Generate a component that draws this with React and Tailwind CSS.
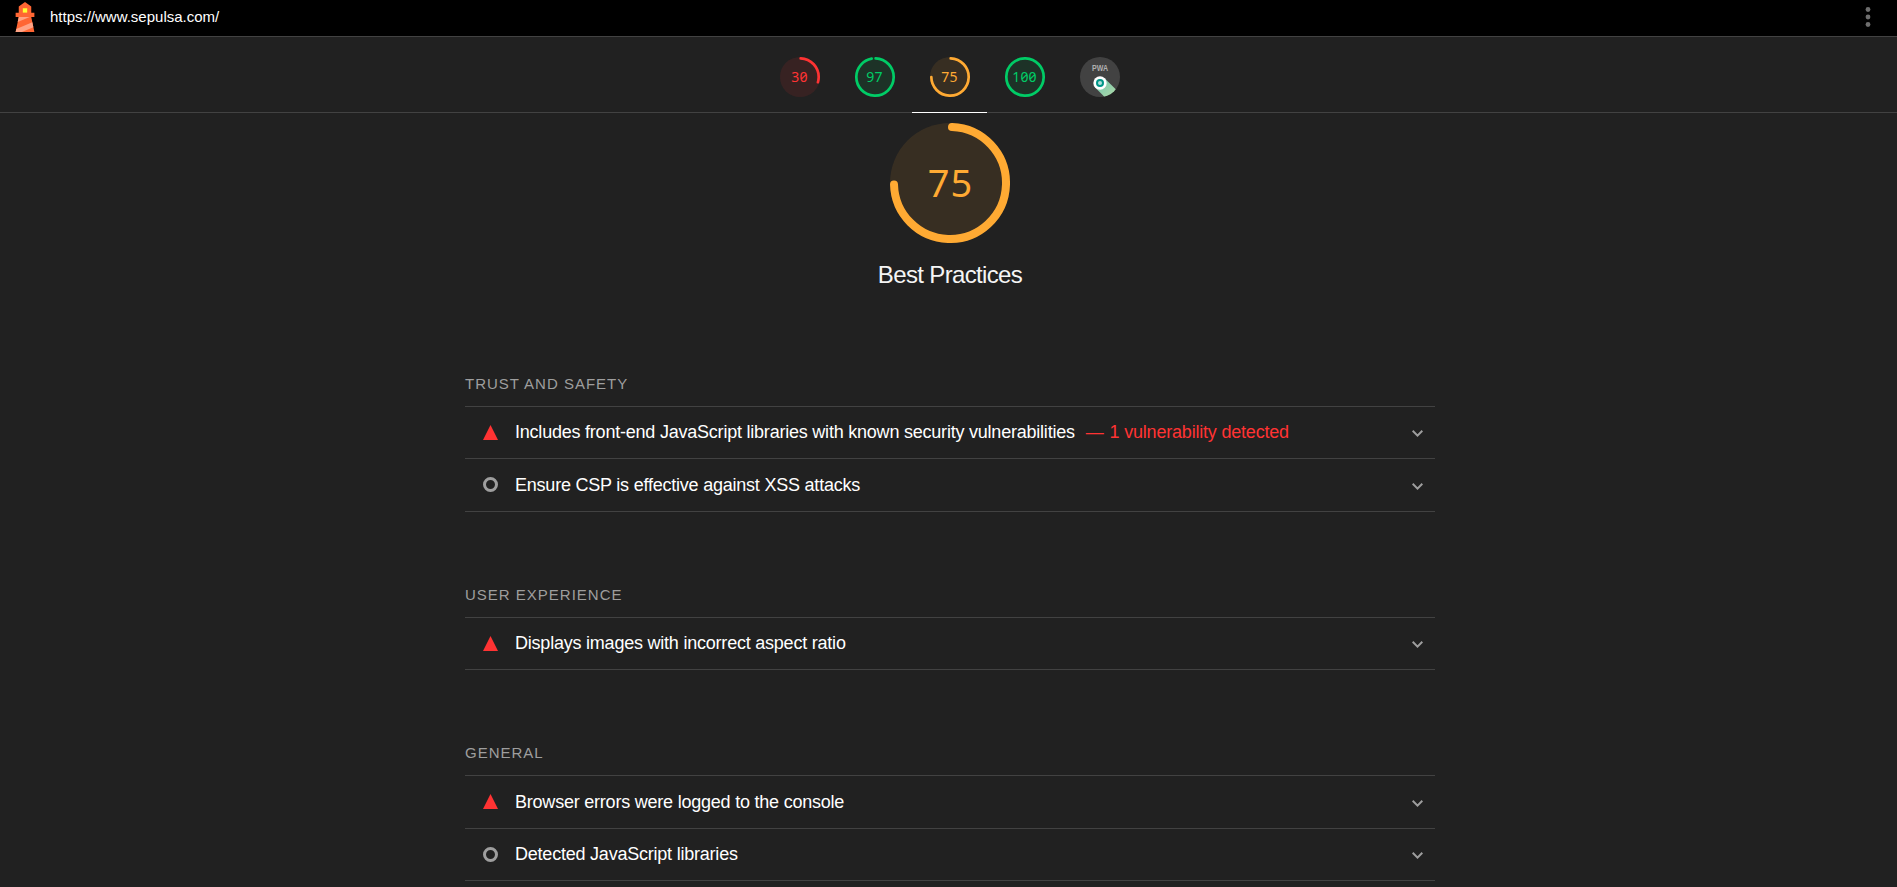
const GAUGE_RADIUS = 56;
const CIRCUMFERENCE = 2 * Math.PI * GAUGE_RADIUS;

const gauges = [
  { score: 30, color: '#ff3333' },
  { score: 97, color: '#00cc66' },
  { score: 75, color: '#ffaa33', active: true },
  { score: 100, color: '#00cc66' },
];

const groups = [
  {
    title: 'Trust and Safety',
    className: 'pt-[83px]',
    audits: [
      {
        status: 'fail',
        title: 'Includes front-end JavaScript libraries with known security vulnerabilities',
        detail: '1 vulnerability detected',
        height: 'h-[52px]',
      },
      { status: 'info', title: 'Ensure CSP is effective against XSS attacks', height: 'h-[53px]' },
    ],
  },
  {
    title: 'User Experience',
    className: 'pt-[73px]',
    audits: [{ status: 'fail', title: 'Displays images with incorrect aspect ratio', height: 'h-[52px]' }],
  },
  {
    title: 'General',
    className: 'pt-[73px]',
    audits: [
      { status: 'fail', title: 'Browser errors were logged to the console', height: 'h-[53px]' },
      { status: 'info', title: 'Detected JavaScript libraries', height: 'h-[52px]' },
    ],
  },
];

function Ring({ score, color, className }) {
  const full = score === 100;
  const dash = full ? CIRCUMFERENCE : (score / 100) * CIRCUMFERENCE - 4;
  return (
    <svg viewBox="0 0 120 120" className={className}>
      <circle cx="60" cy="60" r="60" fill={color} fillOpacity="0.1" />
      <circle
        cx="60"
        cy="60"
        r={GAUGE_RADIUS}
        fill="none"
        stroke={color}
        strokeWidth="8"
        strokeLinecap="round"
        strokeDasharray={`${dash} ${CIRCUMFERENCE}`}
        transform="rotate(-87.95 60 60)"
      />
    </svg>
  );
}

function SmallGauge({ score, color, active }) {
  return (
    <div className={`flex h-[76px] w-[75px] justify-center border-b pt-5 ${active ? 'border-white' : 'border-transparent'}`}>
      <div className="grid size-10 place-items-center">
        <Ring score={score} color={color} className="col-start-1 row-start-1 size-10" />
        <span
          className="col-start-1 row-start-1 pb-px font-['Noto_Sans',sans-serif] text-[14px] leading-none tracking-[0.2px] slashed-zero"
          style={{ color }}
        >
          {score}
        </span>
      </div>
    </div>
  );
}

function Logo() {
  return (
    <svg viewBox="0 0 48 48" className="size-[30px]">
      <path d="m14 7 10-7 10 7v10h5v7h-5l5 24H9l5-24H9v-7h5V7Z" fill="#ff6633" />
      <path
        d="M31.561 24H14l-1.689 8.105L31.561 24ZM18.983 48H9l1.022-4.907L35.723 32.27l1.663 7.98L18.983 48Z"
        fill="#ffa385"
      />
      <path fill="#ffff33" d="M20.5 10h7v7h-7z" />
    </svg>
  );
}

function PwaBadge() {
  return (
    <svg viewBox="0 0 40 40" className="size-10">
      <defs>
        <linearGradient id="beam" x1="20" y1="24" x2="32" y2="38" gradientUnits="userSpaceOnUse">
          <stop offset="0" stopColor="#7bc8b0" />
          <stop offset="1" stopColor="#a5d6a7" />
        </linearGradient>
        <clipPath id="disc">
          <circle cx="20" cy="20" r="20" />
        </clipPath>
      </defs>
      <circle cx="20" cy="20" r="20" fill="#424242" />
      <path d="M24.6 21.2 40 36.6 30.6 46 15.4 30.8Z" fill="url(#beam)" clipPath="url(#disc)" />
      <circle cx="20" cy="26" r="6.7" fill="#fff" />
      <circle cx="20" cy="26" r="3" fill="#b2dfdb" stroke="#009688" strokeWidth="2" />
      <text
        x="12"
        y="14"
        textLength="16"
        lengthAdjust="spacingAndGlyphs"
        className="fill-[#b0b0b0] font-['Liberation_Sans',sans-serif] text-[8.5px] font-bold"
      >
        PWA
      </text>
    </svg>
  );
}

function StatusIcon({ status }) {
  return (
    <svg viewBox="0 0 15 15" className="mt-[18px] size-[15px] shrink-0 self-start">
      {status === 'fail' ? (
        <path d="M7.5 0 15 15H0Z" fill="#ff3333" />
      ) : (
        <circle cx="7.5" cy="7.5" r="6" fill="none" stroke="#9e9e9e" strokeWidth="3" />
      )}
    </svg>
  );
}

function AuditRow({ status, title, detail, height }) {
  return (
    <div className={`flex ${height} items-center border-b border-[#424242] pr-3 pl-[18px]`}>
      <StatusIcon status={status} />
      <span className="ml-[17px] pb-px text-[18px] leading-6 tracking-[-0.22px] whitespace-nowrap text-white">{title}</span>
      {detail && (
        <span className="ml-[11px] flex gap-[6px] pb-px text-[18px] leading-6 tracking-[-0.2px] whitespace-nowrap text-[#ff3333]">
          <span>—</span>
          <span>{detail}</span>
        </span>
      )}
      <svg viewBox="0 0 11 7" className="mt-[2px] ml-auto h-[7px] w-[11px]">
        <path d="M.7.8 5.5 5.6 10.3.8" fill="none" stroke="#9e9e9e" strokeWidth="2" />
      </svg>
    </div>
  );
}

export default function App() {
  return (
    <div className="h-[887px] overflow-hidden bg-[#212121] font-['Liberation_Sans',Arial,sans-serif] text-[#f5f5f5]">
      <header className="flex h-[37px] items-center justify-between border-b border-[#424242] bg-black pr-[26px] pb-[2px] pl-[10px]">
        <div className="flex items-center gap-[10px]">
          <Logo />
          <span className="text-[15px] leading-5 text-white">https://www.sepulsa.com/</span>
        </div>
        <svg viewBox="0 0 6 20" className="h-5 w-[6px]">
          <g fill="#6e6e6e">
            <circle cx="3" cy="2.5" r="2.4" />
            <circle cx="3" cy="10" r="2.4" />
            <circle cx="3" cy="17.5" r="2.4" />
          </g>
        </svg>
      </header>

      <nav className="flex h-[76px] justify-center border-b border-[#424242] pl-[2px]">
        {gauges.map((gauge) => (
          <SmallGauge key={gauge.score} {...gauge} />
        ))}
        <div className="flex h-[76px] w-[75px] justify-center pt-5">
          <PwaBadge />
        </div>
      </nav>

      <main className="ml-[465px] w-[970px]">
        <section className="flex flex-col items-center pt-[10px]">
          <div className="grid size-[120px] place-items-center">
            <Ring score={75} color="#ffaa33" className="col-start-1 row-start-1 size-[120px]" />
            <span className="col-start-1 row-start-1 pb-[3px] pl-px font-['Noto_Sans',sans-serif] text-[38px] leading-none tracking-[1px] text-[#ffaa33]">
              75
            </span>
          </div>
          <h1 className="mt-4 text-[24px] leading-8 tracking-[-0.65px]">Best Practices</h1>
        </section>

        {groups.map((group) => (
          <section key={group.title} className={group.className}>
            <h2 className="h-[33px] border-b border-[#424242] text-[15px] leading-5 tracking-[1px] whitespace-nowrap text-[#9e9e9e] uppercase">
              {group.title}
            </h2>
            {group.audits.map((audit) => (
              <AuditRow key={audit.title} {...audit} />
            ))}
          </section>
        ))}
      </main>
    </div>
  );
}
